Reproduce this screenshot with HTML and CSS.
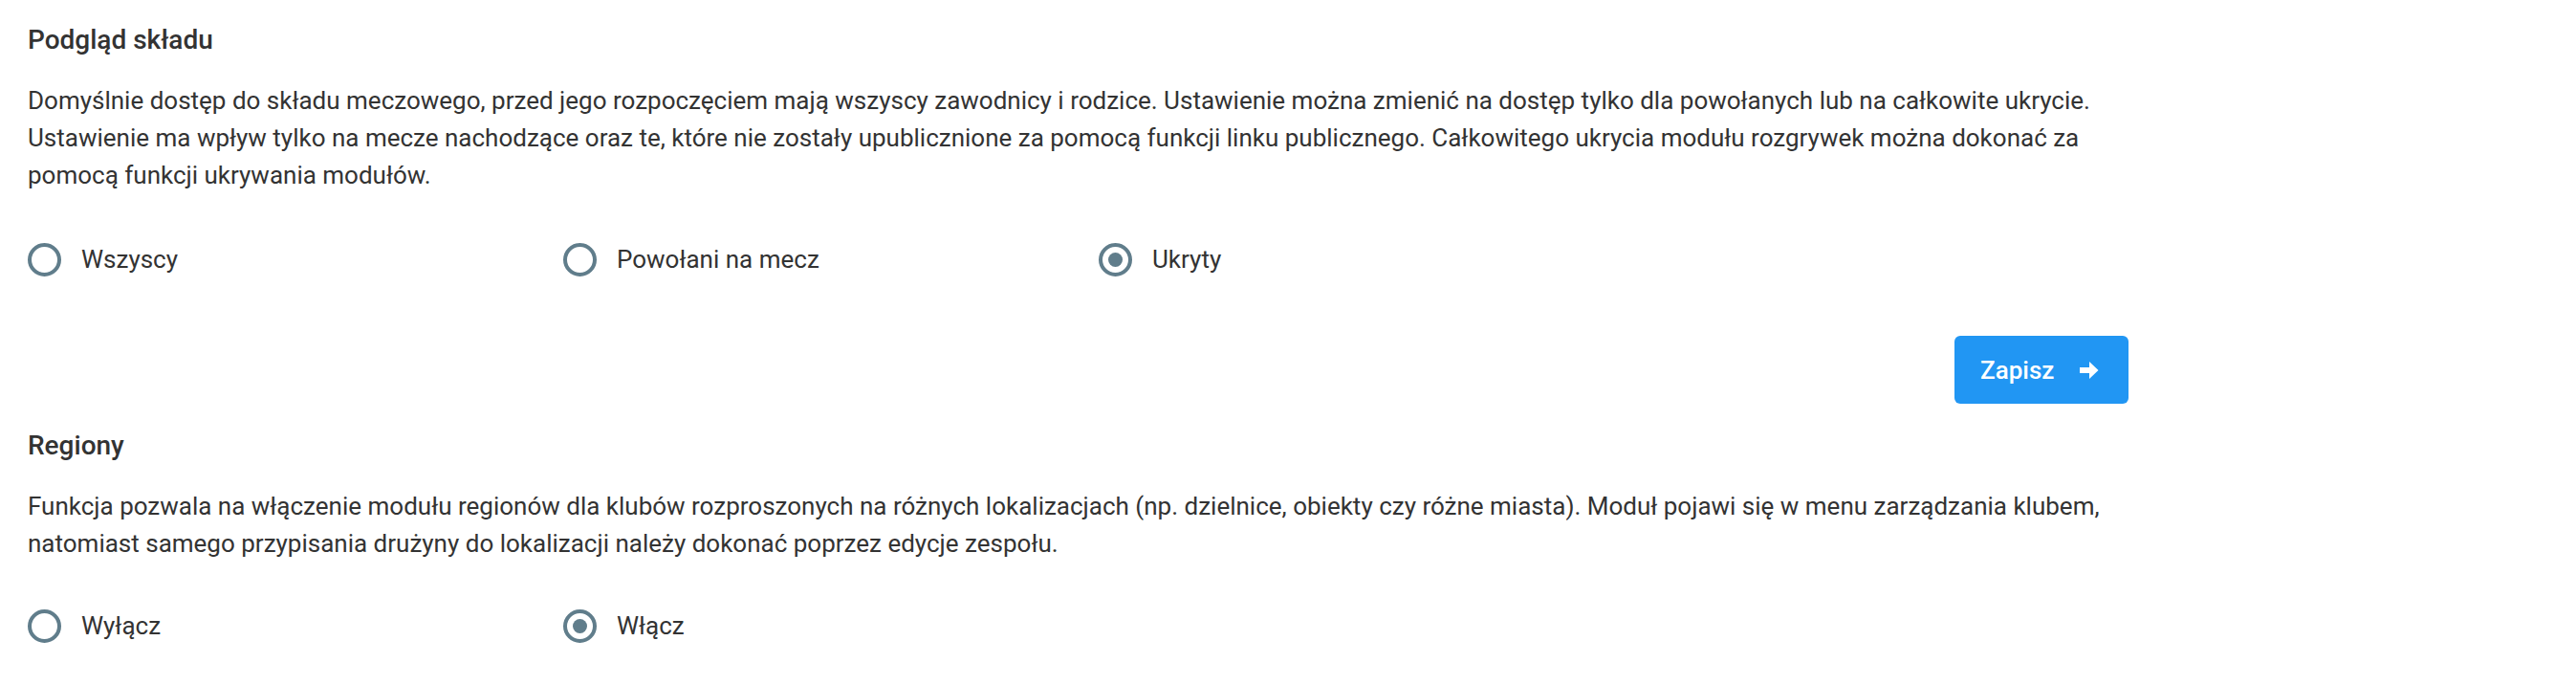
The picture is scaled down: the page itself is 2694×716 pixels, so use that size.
FILE: index.html
```html
<!DOCTYPE html>
<html lang="pl">
<head>
<meta charset="utf-8">
<title>Ustawienia</title>
<link rel="stylesheet" href="styles.css">
</head>
<body>
<div class="page">
  <section class="setting">
    <h2 class="setting-title">Podgląd składu</h2>
    <p class="setting-desc">Domyślnie dostęp do składu meczowego, przed jego rozpoczęciem mają wszyscy zawodnicy i rodzice. Ustawienie można zmienić na dostęp tylko dla powołanych lub na całkowite ukrycie. Ustawienie ma wpływ tylko na mecze nachodzące oraz te, które nie zostały upublicznione za pomocą funkcji linku publicznego. Całkowitego ukrycia modułu rozgrywek można dokonać za pomocą funkcji ukrywania modułów.</p>
    <div class="radio-group radio-group-first">
      <label class="radio"><span class="radio-mark"></span><span class="radio-label">Wszyscy</span></label>
      <label class="radio"><span class="radio-mark"></span><span class="radio-label">Powołani na mecz</span></label>
      <label class="radio"><span class="radio-mark is-checked"></span><span class="radio-label">Ukryty</span></label>
    </div>
  </section>
  <div class="actions">
    <button class="btn-primary" type="button">
      <span>Zapisz</span>
      <svg class="btn-icon" viewBox="0 0 20 20" width="20" height="20" aria-hidden="true">
        <polygon points="0,7 10,7 10,1 19.5,10 10,19 10,13 0,13" fill="#ffffff"/>
      </svg>
    </button>
  </div>
  <section class="setting">
    <h2 class="setting-title">Regiony</h2>
    <p class="setting-desc">Funkcja pozwala na włączenie modułu regionów dla klubów rozproszonych na różnych lokalizacjach (np. dzielnice, obiekty czy różne miasta). Moduł pojawi się w menu zarządzania klubem, natomiast samego przypisania drużyny do lokalizacji należy dokonać poprzez edycje zespołu.</p>
    <div class="radio-group">
      <label class="radio"><span class="radio-mark"></span><span class="radio-label">Wyłącz</span></label>
      <label class="radio"><span class="radio-mark is-checked"></span><span class="radio-label">Włącz</span></label>
    </div>
  </section>
</div>
</body>
</html>
```
FILE: styles.css
```css
* { box-sizing: border-box; }

html, body {
  margin: 0;
  padding: 0;
  background: #ffffff;
}

body {
  font-family: Roboto, "Liberation Sans", Arial, sans-serif;
  color: #333333;
}

.page {
  width: 2226px;
  padding: 22px 0 0 29px;
}

.setting-title {
  margin: 0;
  font-size: 28px;
  line-height: 40px;
  font-weight: 500;
  color: #333333;
}

.setting-desc {
  margin: 24px 0 0;
  font-size: 26px;
  line-height: 39px;
  color: #333333;
}

.radio-group {
  display: grid;
  grid-template-columns: repeat(3, 560px);
  margin-top: 47px;
}

.radio-group-first {
  margin-top: 49px;
}

.radio {
  display: flex;
  align-items: center;
  gap: 21px;
  height: 39px;
}

.radio-mark {
  width: 35px;
  height: 35px;
  border: 4px solid #607d8b;
  border-radius: 50%;
  display: flex;
  align-items: center;
  justify-content: center;
  flex: none;
}

.radio-mark.is-checked::after {
  content: "";
  width: 15px;
  height: 15px;
  border-radius: 50%;
  background: #607d8b;
}

.radio-label {
  font-size: 26px;
  line-height: 39px;
  color: #333333;
}

.actions {
  display: flex;
  justify-content: flex-end;
  margin-top: 60px;
  margin-bottom: 24px;
}

.btn-primary {
  display: flex;
  align-items: center;
  gap: 27px;
  height: 71px;
  width: 182px;
  padding: 0 33px 0 27px;
  border: none;
  border-radius: 6px;
  background: #2196f3;
  color: #ffffff;
  font-family: Roboto, "Liberation Sans", Arial, sans-serif;
  font-size: 26px;
  font-weight: 500;
  cursor: pointer;
}

.btn-icon {
  width: 20px;
  height: 20px;
  flex: none;
}
```
